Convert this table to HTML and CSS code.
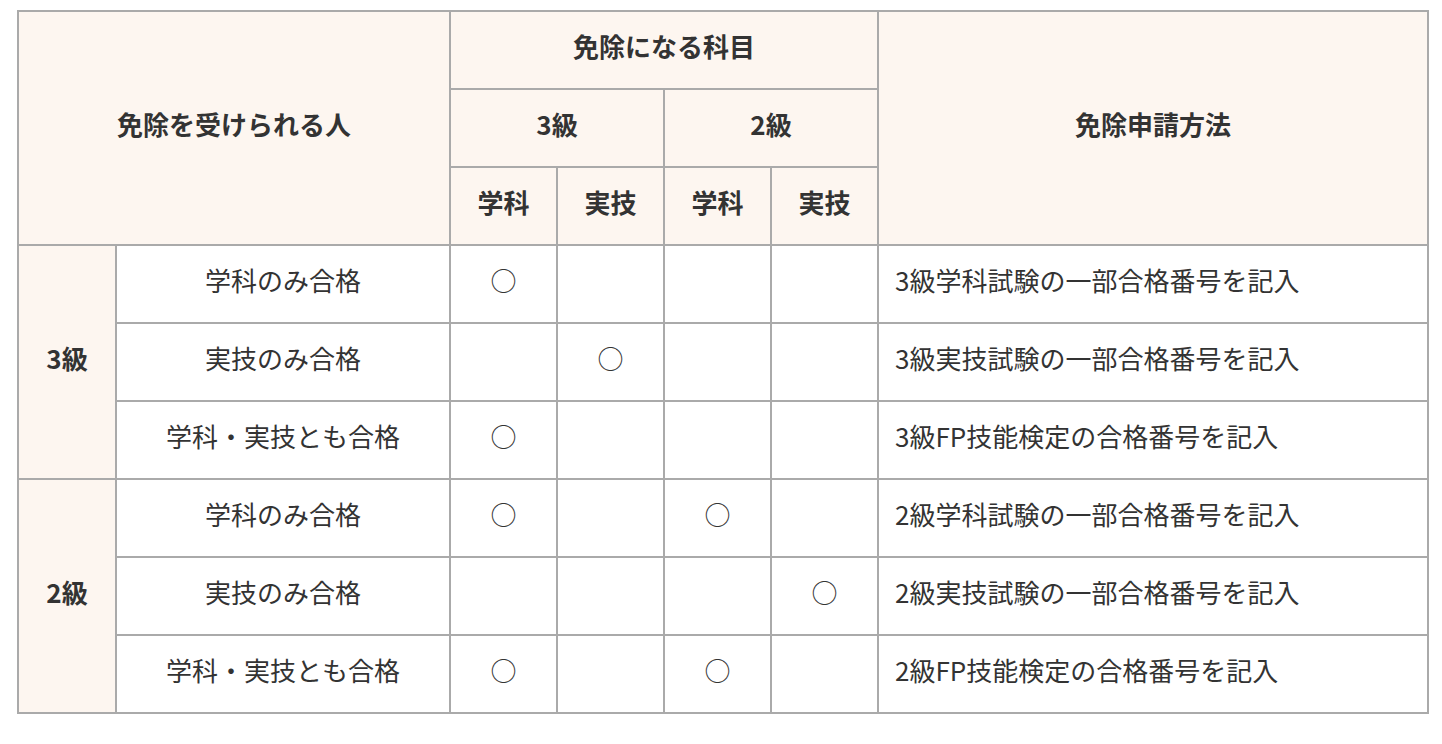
FILE: index.html
```html
<!DOCTYPE html>
<html lang="ja">
<head>
<meta charset="utf-8">
<title>免除</title>
<link rel="stylesheet" href="styles.css">
</head>
<body>
<div class="wrap">
<table class="exempt">
  <colgroup>
    <col class="c-grade">
    <col class="c-who">
    <col class="c-mark">
    <col class="c-mark">
    <col class="c-mark">
    <col class="c-mark">
    <col class="c-how">
  </colgroup>
  <thead>
    <tr>
      <th rowspan="3" colspan="2">免除を受けられる人</th>
      <th colspan="4">免除になる科目</th>
      <th rowspan="3">免除申請方法</th>
    </tr>
    <tr>
      <th colspan="2">3級</th>
      <th colspan="2">2級</th>
    </tr>
    <tr>
      <th>学科</th>
      <th>実技</th>
      <th>学科</th>
      <th>実技</th>
    </tr>
  </thead>
  <tbody>
    <tr>
      <th rowspan="3" class="grade">3級</th>
      <td class="who">学科のみ合格</td>
      <td class="mark">○</td><td class="mark"></td><td class="mark"></td><td class="mark"></td>
      <td class="how">3級学科試験の一部合格番号を記入</td>
    </tr>
    <tr>
      <td class="who">実技のみ合格</td>
      <td class="mark"></td><td class="mark">○</td><td class="mark"></td><td class="mark"></td>
      <td class="how">3級実技試験の一部合格番号を記入</td>
    </tr>
    <tr>
      <td class="who">学科・実技とも合格</td>
      <td class="mark">○</td><td class="mark"></td><td class="mark"></td><td class="mark"></td>
      <td class="how">3級FP技能検定の合格番号を記入</td>
    </tr>
    <tr>
      <th rowspan="3" class="grade">2級</th>
      <td class="who">学科のみ合格</td>
      <td class="mark">○</td><td class="mark"></td><td class="mark">○</td><td class="mark"></td>
      <td class="how">2級学科試験の一部合格番号を記入</td>
    </tr>
    <tr>
      <td class="who">実技のみ合格</td>
      <td class="mark"></td><td class="mark"></td><td class="mark"></td><td class="mark">○</td>
      <td class="how">2級実技試験の一部合格番号を記入</td>
    </tr>
    <tr>
      <td class="who">学科・実技とも合格</td>
      <td class="mark">○</td><td class="mark"></td><td class="mark">○</td><td class="mark"></td>
      <td class="how">2級FP技能検定の合格番号を記入</td>
    </tr>
  </tbody>
</table>
</div>
</body>
</html>
```

FILE: styles.css
```css
html, body {
  margin: 0;
  padding: 0;
  background: #ffffff;
}

.wrap {
  padding: 10px 17px;
}

.exempt {
  border-collapse: collapse;
  table-layout: fixed;
  width: 1410px;
  font-family: "Noto Sans CJK JP", "Noto Sans", sans-serif;
  font-size: 26px;
  color: #333333;
}

.c-grade { width: 98px; }
.c-who { width: 334px; }
.c-mark { width: 107px; }
.c-how { width: 550px; }

.exempt th,
.exempt td {
  border: 2px solid #aaaaaa;
  padding: 15px 16px 23px;
  line-height: 38px;
  text-align: center;
  vertical-align: middle;
  white-space: nowrap;
}

.exempt th {
  background: #fdf6f0;
  font-weight: 700;
}

.exempt td {
  font-weight: 400;
  background: #ffffff;
}

.exempt td.how {
  text-align: left;
}

.exempt td.mark {
  padding-left: 0;
  padding-right: 0;
}
```
